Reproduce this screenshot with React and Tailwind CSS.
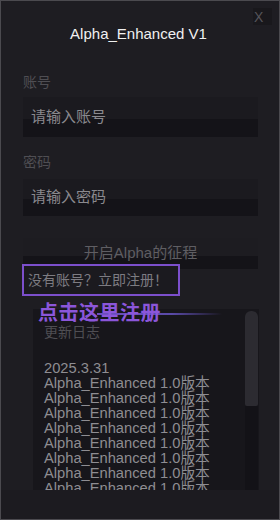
import React from 'react';

const changelog = Array.from({ length: 8 }, () => 'Alpha_Enhanced 1.0版本');

const Field = ({ label, placeholder, labelTop, inputTop, height }) => (
  <>
    <div className={`${labelTop} ml-[22px] h-[20px] leading-[20px] text-[14px] text-[#4f4e53]`}>{label}</div>
    <div
      className={`${inputTop} ${height} ml-[22px] w-[235px] flex items-center pl-[8px] text-[15px] text-[#8a898e] bg-[linear-gradient(to_bottom,#1b1a1f_0%,#1b1a1f_55%,#141318_55%,#141318_100%)]`}
    >
      {placeholder}
    </div>
  </>
);

export default function App() {
  return (
    <div
      className="relative w-[280px] h-[520px] overflow-hidden bg-[#1e1d22] border border-[#4b4a4f] flex flex-col"
      style={{ fontFamily: '"Liberation Sans", "Noto Sans CJK SC", sans-serif' }}
    >
      {/* close */}
      <div className="absolute top-[7px] right-[7px] w-[19px] h-[17px] bg-[#19181c] flex items-center justify-start pl-[1px] text-[14px] text-[#55545a] leading-none">
        X
      </div>

      <div className="mt-[23px] h-[20px] leading-[20px] text-center text-[15px] text-[#f0f0f0] pr-[3px]">
        Alpha_Enhanced V1
      </div>

      <Field label="账号" placeholder="请输入账号" labelTop="mt-[28px]" inputTop="mt-[5px]" height="h-[40px]" />
      <Field label="密码" placeholder="请输入密码" labelTop="mt-[15px]" inputTop="mt-[7px]" height="h-[37px]" />

      <div className="mt-[22px] ml-[22px] w-[235px] h-[31px] flex items-center justify-center text-[15px] text-[#5f5e63] bg-[linear-gradient(to_bottom,#1d1c21_0%,#1d1c21_58%,#141318_58%,#141318_100%)]">
        开启Alpha的征程
      </div>

      {/* register hint, with the purple annotation */}
      <div className="relative -mt-[5px] ml-[21px] w-[158px] h-[32px] border-2 border-[#7c4fcc] flex items-center pl-[4px] text-[14px] text-[#7d7c82] bg-[#1b1a1f]">
        没有账号？立即注册！
      </div>

      {/* changelog */}
      <div className="relative mt-[13px] ml-[32px] w-[226px] h-[181px] bg-[#17161b] overflow-hidden flex">
        <div className="flex-1 pl-[11px] pt-[15px] text-[14.7px] text-[#8e8d92]">
          <div className="text-[14px] leading-[16px] text-[#4f4e53]">更新日志</div>
          <div className="mt-[21px] leading-[15px]">2025.3.31</div>
          {changelog.map((line, i) => (
            <div key={i} className="leading-[15px] whitespace-nowrap">
              {line}
            </div>
          ))}
        </div>
        <div className="w-[13px] mr-[1px] flex flex-col">
          <div className="mt-[2px] h-[95px] rounded-t-[6px] rounded-b-[2px] bg-[#2c2b31]" />
          <div className="flex-1 bg-[#131217]" />
        </div>
      </div>

      <div className="flex-1 bg-[#1c1b20]" />

      {/* annotation overlay */}
      <div className="absolute left-[96px] top-[312px] w-[125px] h-[2px] bg-[linear-gradient(to_right,#6d4fc0,#5a4aa8_60%,rgba(90,74,168,0))]" />
      <div className="absolute left-[37px] top-[300px] h-[24px] leading-[24px] text-[20px] font-bold text-[#8b56da] tracking-[0.5px]">
        点击这里注册
      </div>
    </div>
  );
}
